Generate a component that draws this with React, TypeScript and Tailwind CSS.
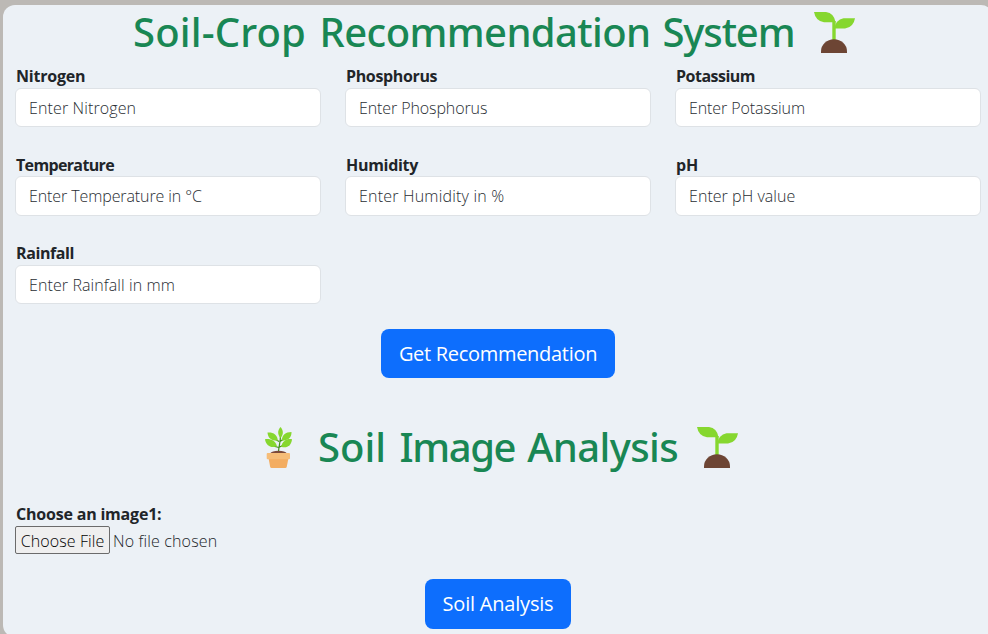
function Seedling() {
  return (
    <svg viewBox="0 0 41 41" className="h-[41px] w-[41px] shrink-0" aria-hidden="true">
      <path d="M18.3 28V9h3.4v19z" fill="#86d72f" />
      <path d="M0 0h12Q20 1 21.5 10.2H10Q1.5 9 0 0Z" fill="#86d72f" />
      <path d="M41 6.3H29.5Q21.5 8 20.5 16.6H31Q39.5 15.500 41 6.3Z" fill="#86d72f" />
      <path d="M7 41v-1.500a13 12.200 0 0 1 26 0V41Z" fill="#6d4534" />
    </svg>
  );
}

function PottedPlant() {
  return (
    <svg viewBox="0 0 27 41" className="h-[41px] w-[27px] shrink-0" aria-hidden="true">
      <path d="M13.500 25C13.500 20 15.500 16 15.500 8M14.500 20Q18 18.500 22 16.500M14 14.500Q11 13 8 10.500M15 14.500Q19 12 22 9.500M13.800 20.500Q10 20 5 16.500" fill="none" stroke="#44911b" strokeWidth="1.200" />
      <path d="M5 26.500Q7 23.700 13.500 23.700T22 26.500Z" fill="#7b4a3a" />
      <g fill="#86d72f">
        <path d="M15.500 0C18.600 3.500 18.600 7.500 15.500 11C12.400 7.500 12.400 3.500 15.500 0Z" />
        <path d="M2.500 5.500C8 5 12.500 7.500 12.800 13.700C6.500 14 2.800 11 2.500 5.500Z" />
        <path d="M26.500 5C26.700 10.500 23 13.700 16.800 13.700C16.800 8 20.500 5 26.500 5Z" />
        <path d="M0 12.200C6 11.500 10.500 13.800 12 19.200C6 21.500 0.800 18.500 0 12.200Z" />
        <path d="M27 12.200C26.500 18.200 22 21.800 16.200 19.800C17.300 14 21.500 11.500 27 12.200Z" />
      </g>
      <path d="M3.500 31h20L21.700 40q-.3 1-1.300 1H6.500q-1 0-1.300-1Z" fill="#f3ad61" />
      <rect x="1.700" y="26" width="23.300" height="6.200" rx="1" fill="#f6bd78" />
    </svg>
  );
}

type FieldProps = { label: string; placeholder: string; labelTracking: string; tracking: string };

function Field({ label, placeholder, labelTracking, tracking }: FieldProps) {
  return (
    <div className="h-[88.4px]">
      <label className={`block h-6 pt-[0.2px] pl-px text-[16px] leading-6 font-bold ${labelTracking}`}>{label}</label>
      <input
        placeholder={placeholder}
        className={`block h-[39.2px] w-full rounded-md border border-[#dee2e6] bg-white pt-px pr-3 pl-[13px] text-[16px] font-light outline-none placeholder:text-[#282d32] ${tracking}`}
      />
    </div>
  );
}

const fields: FieldProps[] = [
  { label: "Nitrogen", placeholder: "Enter Nitrogen", labelTracking: "tracking-[-0.2px]", tracking: "tracking-[0.12px]" },
  { label: "Phosphorus", placeholder: "Enter Phosphorus", labelTracking: "tracking-[-0.35px]", tracking: "tracking-[-0.1px]" },
  { label: "Potassium", placeholder: "Enter Potassium", labelTracking: "tracking-[-0.5px]", tracking: "tracking-[-0.1px]" },
  { label: "Temperature", placeholder: "Enter Temperature in °C", labelTracking: "tracking-[-0.65px]", tracking: "tracking-[-0.1px]" },
  { label: "Humidity", placeholder: "Enter Humidity in %", labelTracking: "tracking-[-0.3px]", tracking: "tracking-[0.2px]" },
  { label: "pH", placeholder: "Enter pH value", labelTracking: "tracking-[-0.2px]", tracking: "tracking-[0.05px]" },
  { label: "Rainfall", placeholder: "Enter Rainfall in mm", labelTracking: "tracking-[-0.4px]", tracking: "tracking-[0.1px]" },
];

export default function App() {
  return (
    <div className="h-[634px] w-full overflow-hidden bg-[#bcb9b5] pt-[5px] pl-[3px] font-['Open_Sans','Noto_Sans',sans-serif] text-[#212529]">
      <main className="h-[632px] w-[990px] rounded-xl bg-[#ecf1f6] px-3">
        <h1 className="flex h-[59px] items-start pt-[7px] pl-[118px] text-[#198754]">
          <span className="-mt-px w-[681px] font-['Noto_Sans',sans-serif] text-[40px] leading-[42px] font-medium whitespace-nowrap">
            <span className="tracking-[0.15px]">Soil-Crop </span>
            <span className="ml-[3px] tracking-[-0.6px]">Recommendation </span>
            <span className="ml-[2px] tracking-[-1.1px]">System</span>
          </span>
          <Seedling />
        </h1>
        <div className="grid h-[265.5px] grid-cols-3 content-start gap-x-6">
          {fields.map((field) => (
            <Field key={field.label} {...field} />
          ))}
        </div>
        <div className="flex h-[97px] justify-center">
          <button className="-mt-[1px] h-[49px] w-[234px] rounded-lg bg-[#0d6efd] pt-px text-[20px] tracking-[-0.3px] whitespace-nowrap text-white">
            Get Recommendation
          </button>
        </div>
        <h2 className="flex h-[72px] items-start pl-[250px] text-[#198754]">
          <PottedPlant />
          <span className="-mt-px ml-[26px] w-[379px] font-['Noto_Sans',sans-serif] text-[40px] leading-[42px] font-medium whitespace-nowrap">
            <span className="tracking-[0px]">Soil </span>
            <span className="ml-[3px] tracking-[-1.4px]">Image </span>
            <span className="ml-[3px] tracking-[-0.6px]">Analysis</span>
          </span>
          <Seedling />
        </h2>
        <div className="pt-[3px]">
          <label className="block h-6 pl-px text-[16px] leading-6 font-bold tracking-[-0.2px]">Choose an image1:</label>
          <div className="flex h-7 items-center text-[16px] font-light whitespace-nowrap">
            <button className="h-7 w-[95px] rounded-[2px] border border-[#6b6b6b] bg-[#efefef] pt-[2px] tracking-[0.1px] text-black">Choose File</button>
            <span className="ml-[3px] pt-[2px] tracking-[0.15px]">No file chosen</span>
          </div>
        </div>
        <div className="mt-[25px] flex justify-center">
          <button className="h-[50px] w-[146px] rounded-lg bg-[#0d6efd] text-[20px] tracking-[-0.2px] whitespace-nowrap text-white">
            Soil Analysis
          </button>
        </div>
      </main>
    </div>
  );
}
